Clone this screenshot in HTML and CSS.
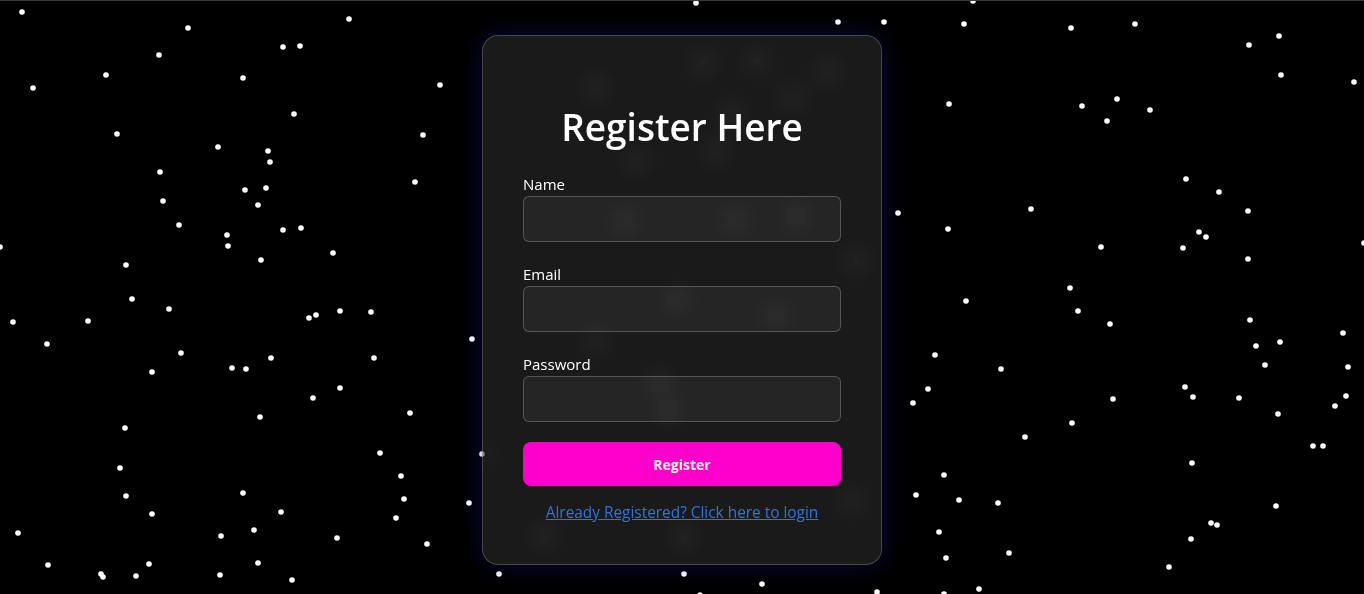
FILE: index.html
```html
<!DOCTYPE html>
<html lang="en">
<head>
<meta charset="UTF-8">
<title>Register</title>
<link rel="stylesheet" href="styles.css">
</head>
<body>
<svg class="stars" width="1364" height="594" viewBox="0 0 1364 594" aria-hidden="true">
<g fill="#fff">
<circle cx="22" cy="11" r="2.8"/><circle cx="188" cy="27" r="2.8"/><circle cx="349" cy="18" r="2.8"/><circle cx="159" cy="54" r="2.8"/><circle cx="283" cy="46" r="2.8"/><circle cx="300" cy="45" r="2.8"/><circle cx="106" cy="74" r="2.8"/><circle cx="33" cy="87" r="2.8"/><circle cx="243" cy="77" r="2.8"/><circle cx="440" cy="84" r="2.8"/><circle cx="294" cy="113" r="2.8"/><circle cx="117" cy="133" r="2.8"/><circle cx="423" cy="134" r="2.8"/><circle cx="218" cy="146" r="2.8"/><circle cx="268" cy="150" r="2.8"/><circle cx="270" cy="161" r="2.8"/><circle cx="160" cy="171" r="2.8"/><circle cx="415" cy="181" r="2.8"/><circle cx="245" cy="189" r="2.8"/><circle cx="266" cy="187" r="2.8"/><circle cx="163" cy="200" r="2.8"/><circle cx="258" cy="204" r="2.8"/><circle cx="179" cy="224" r="2.8"/><circle cx="227" cy="234" r="2.8"/><circle cx="283" cy="229" r="2.8"/><circle cx="301" cy="227" r="2.8"/><circle cx="228" cy="245" r="2.8"/><circle cx="0" cy="246" r="2.8"/><circle cx="333" cy="252" r="2.8"/><circle cx="126" cy="264" r="2.8"/><circle cx="261" cy="259" r="2.8"/><circle cx="132" cy="298" r="2.8"/>
<circle cx="13" cy="321" r="2.8"/><circle cx="88" cy="320" r="2.8"/><circle cx="169" cy="308" r="2.8"/><circle cx="309" cy="317" r="2.8"/><circle cx="316" cy="314" r="2.8"/><circle cx="340" cy="310" r="2.8"/><circle cx="371" cy="311" r="2.8"/><circle cx="472" cy="338" r="2.8"/><circle cx="47" cy="343" r="2.8"/><circle cx="181" cy="352" r="2.8"/><circle cx="152" cy="371" r="2.8"/><circle cx="232" cy="367" r="2.8"/><circle cx="246" cy="368" r="2.8"/><circle cx="271" cy="357" r="2.8"/><circle cx="374" cy="357" r="2.8"/><circle cx="340" cy="387" r="2.8"/><circle cx="313" cy="397" r="2.8"/><circle cx="260" cy="416" r="2.8"/><circle cx="410" cy="412" r="2.8"/><circle cx="125" cy="427" r="2.8"/><circle cx="380" cy="452" r="2.8"/><circle cx="482" cy="453" r="2.8"/><circle cx="120" cy="467" r="2.8"/><circle cx="401" cy="475" r="2.8"/><circle cx="126" cy="495" r="2.8"/><circle cx="243" cy="492" r="2.8"/><circle cx="404" cy="498" r="2.8"/><circle cx="469" cy="502" r="2.8"/><circle cx="152" cy="513" r="2.8"/><circle cx="281" cy="511" r="2.8"/><circle cx="396" cy="517" r="2.8"/><circle cx="18" cy="532" r="2.8"/><circle cx="221" cy="535" r="2.8"/><circle cx="254" cy="529" r="2.8"/><circle cx="337" cy="537" r="2.8"/><circle cx="427" cy="543" r="2.8"/><circle cx="48" cy="564" r="2.8"/><circle cx="101" cy="573" r="2.8"/><circle cx="103" cy="576" r="2.8"/><circle cx="149" cy="563" r="2.8"/><circle cx="136" cy="575" r="2.8"/><circle cx="220" cy="574" r="2.8"/><circle cx="258" cy="562" r="2.8"/><circle cx="292" cy="579" r="2.8"/>
<circle cx="884" cy="21" r="2.8"/><circle cx="964" cy="23" r="2.8"/><circle cx="1071" cy="27" r="2.8"/><circle cx="1135" cy="23" r="2.8"/><circle cx="1249" cy="44" r="2.8"/><circle cx="1279" cy="35" r="2.8"/><circle cx="1281" cy="74" r="2.8"/><circle cx="1354" cy="81" r="2.8"/><circle cx="949" cy="103" r="2.8"/><circle cx="1082" cy="105" r="2.8"/><circle cx="1117" cy="98" r="2.8"/><circle cx="1150" cy="109" r="2.8"/><circle cx="1107" cy="120" r="2.8"/><circle cx="1186" cy="178" r="2.8"/><circle cx="1219" cy="191" r="2.8"/><circle cx="1248" cy="210" r="2.8"/><circle cx="1031" cy="208" r="2.8"/><circle cx="898" cy="212" r="2.8"/><circle cx="948" cy="228" r="2.8"/><circle cx="1199" cy="231" r="2.8"/><circle cx="1206" cy="236" r="2.8"/><circle cx="1101" cy="246" r="2.8"/><circle cx="1183" cy="247" r="2.8"/><circle cx="1364" cy="242" r="2.8"/><circle cx="1248" cy="258" r="2.8"/><circle cx="1070" cy="287" r="2.8"/><circle cx="966" cy="300" r="2.8"/><circle cx="973" cy="0" r="2.8"/>
<circle cx="1078" cy="310" r="2.8"/><circle cx="1110" cy="323" r="2.8"/><circle cx="1250" cy="319" r="2.8"/><circle cx="1343" cy="332" r="2.8"/><circle cx="1256" cy="345" r="2.8"/><circle cx="1280" cy="341" r="2.8"/><circle cx="935" cy="354" r="2.8"/><circle cx="1001" cy="368" r="2.8"/><circle cx="1265" cy="364" r="2.8"/><circle cx="1348" cy="366" r="2.8"/><circle cx="928" cy="388" r="2.8"/><circle cx="913" cy="402" r="2.8"/><circle cx="1113" cy="398" r="2.8"/><circle cx="1185" cy="386" r="2.8"/><circle cx="1193" cy="396" r="2.8"/><circle cx="1239" cy="397" r="2.8"/><circle cx="1346" cy="395" r="2.8"/><circle cx="1335" cy="405" r="2.8"/><circle cx="1278" cy="413" r="2.8"/><circle cx="1072" cy="422" r="2.8"/><circle cx="1025" cy="436" r="2.8"/><circle cx="1313" cy="445" r="2.8"/><circle cx="1323" cy="445" r="2.8"/><circle cx="1192" cy="462" r="2.8"/><circle cx="944" cy="474" r="2.8"/><circle cx="916" cy="494" r="2.8"/><circle cx="959" cy="499" r="2.8"/><circle cx="998" cy="502" r="2.8"/><circle cx="1276" cy="505" r="2.8"/><circle cx="1211" cy="522" r="2.8"/><circle cx="1217" cy="524" r="2.8"/><circle cx="939" cy="531" r="2.8"/><circle cx="1191" cy="538" r="2.8"/><circle cx="1009" cy="552" r="2.8"/><circle cx="946" cy="557" r="2.8"/><circle cx="1169" cy="566" r="2.8"/><circle cx="979" cy="588" r="2.8"/><circle cx="944" cy="593" r="2.8"/>
<circle cx="499" cy="573" r="2.8"/><circle cx="684" cy="573" r="2.8"/><circle cx="762" cy="583" r="2.8"/><circle cx="877" cy="591" r="2.8"/><circle cx="700" cy="594" r="2.8"/><circle cx="696" cy="2" r="2.8"/><circle cx="838" cy="21" r="2.8"/>
<circle cx="703" cy="62" r="2.8"/><circle cx="757" cy="60" r="2.8"/><circle cx="828" cy="70" r="2.8"/><circle cx="596" cy="86" r="2.8"/><circle cx="792" cy="97" r="2.8"/><circle cx="637" cy="160" r="2.8"/><circle cx="731" cy="113" r="2.8"/><circle cx="716" cy="150" r="2.8"/><circle cx="797" cy="215" r="2.8"/><circle cx="735" cy="219" r="2.8"/><circle cx="625" cy="220" r="2.8"/><circle cx="856" cy="260" r="2.8"/><circle cx="678" cy="298" r="2.8"/><circle cx="776" cy="315" r="2.8"/><circle cx="596" cy="340" r="2.8"/><circle cx="659" cy="380" r="2.8"/><circle cx="669" cy="410" r="2.8"/><circle cx="545" cy="535" r="2.8"/><circle cx="684" cy="536" r="2.8"/><circle cx="852" cy="500" r="2.8"/>
</g>
</svg>
<main class="page">
  <form class="card">
    <h2 class="title">Register Here</h2>
    <div class="field">
      <label class="label" for="name">Name</label>
      <input class="input" id="name" type="text">
    </div>
    <div class="field">
      <label class="label" for="email">Email</label>
      <input class="input" id="email" type="email">
    </div>
    <div class="field">
      <label class="label" for="password">Password</label>
      <input class="input" id="password" type="password">
    </div>
    <button class="btn" type="button">Register</button>
    <p class="login"><a href="#">Already Registered? Click here to login</a></p>
  </form>
</main>
</body>
</html>
```
FILE: styles.css
```css
* { box-sizing: border-box; }
html, body { margin: 0; padding: 0; }
body {
  background: #000;
  width: 1364px;
  height: 594px;
  overflow: hidden;
  position: relative;
  font-family: "Open Sans", "Noto Sans", sans-serif;
  border-top: 1px solid #3a3a3a;
}
.stars {
  position: absolute;
  left: 0;
  top: 0;
}
.page {
  position: relative;
  display: flex;
  justify-content: center;
  padding-top: 34px;
}
.card {
  width: 400px;
  height: 530px;
  padding: 40px;
  border-radius: 16px;
  border: 1px solid rgba(255, 255, 255, 0.2);
  background: rgba(255, 255, 255, 0.1);
  backdrop-filter: blur(12px);
  box-shadow: 0 0 25px rgba(20, 30, 170, 0.35);
  display: flex;
  flex-direction: column;
}
.title {
  margin: 29px 0 26px;
  font-size: 37px;
  line-height: 44px;
  font-weight: 600;
  color: #fff;
  text-align: center;
}
.field {
  display: flex;
  flex-direction: column;
  margin-bottom: 23px;
}
.label {
  color: #fff;
  font-size: 15px;
  line-height: 18px;
  margin-bottom: 3px;
}
.input {
  height: 46px;
  width: 100%;
  border-radius: 6px;
  border: 1px solid rgba(255, 255, 255, 0.22);
  background: rgba(255, 255, 255, 0.05);
  color: #fff;
  font: inherit;
  padding: 0 12px;
}
.btn {
  margin-top: -3px;
  height: 44px;
  width: 100%;
  border: 0;
  border-radius: 8px;
  background: #ff00cc;
  color: #fff;
  font-family: inherit;
  font-size: 14px;
  font-weight: 700;
}
.login {
  margin: 17px 0 0;
  text-align: center;
  font-size: 15.4px;
  line-height: 20px;
}
.login a {
  color: #2d74e0;
  text-decoration: underline;
}
```
